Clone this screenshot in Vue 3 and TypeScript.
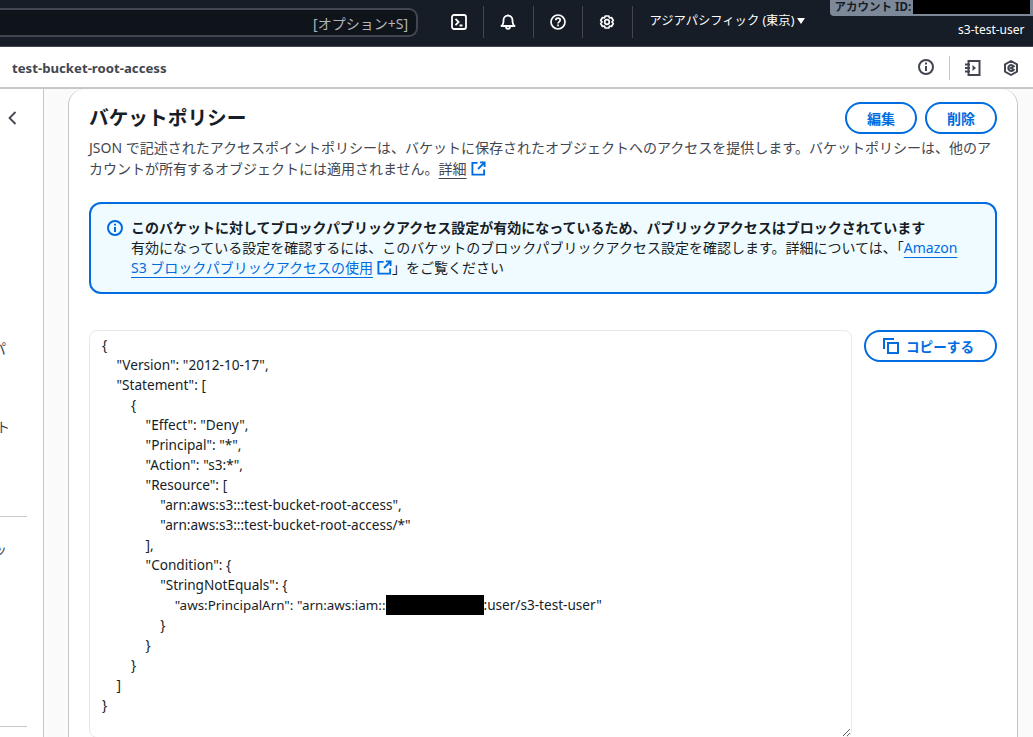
<script setup lang="ts">
const policyBefore = `{
    "Version": "2012-10-17",
    "Statement": [
        {
            "Effect": "Deny",
            "Principal": "*",
            "Action": "s3:*",
            "Resource": [
                "arn:aws:s3:::test-bucket-root-access",
                "arn:aws:s3:::test-bucket-root-access/*"
            ],
            "Condition": {
                "StringNotEquals": {
                    `
const arnLine = `"aws:PrincipalArn": "arn:aws:iam::`
const policyAfter = `:user/s3-test-user"
                }
            }
        }
    ]
}`
</script>

<template>
  <div class="page">
    <header class="topbar">
      <div class="search"><span>[オプション+S]</span></div>
      <div class="tool first">
        <svg width="16" height="16" viewBox="0 0 16 16" fill="none" stroke="#fff" stroke-width="1.8"><rect x="1" y="1" width="14" height="14" rx="2"/><path d="M4.5 4.8 7.6 8l-3.1 3.2M8.5 11.5h3"/></svg>
      </div>
      <div class="tool">
        <svg width="16" height="16" viewBox="0 0 16 16" fill="none" stroke="#fff" stroke-width="1.8" stroke-linejoin="round"><path d="M1.5 12h13c-1.500-1.300-2-2.500-2-4.500V6a4.500 4.500 0 0 0-9 0v1.500c0 2-.5 3.200-2 4.500zM6 12.500c0 1.500.8 2.300 2 2.300s2-.8 2-2.300M8 1.500V.5"/></svg>
      </div>
      <div class="tool">
        <svg width="16" height="16" viewBox="0 0 16 16" fill="none" stroke="#fff" stroke-width="1.7"><circle cx="8" cy="8" r="7"/><path d="M5.800 6.200C5.800 5 6.800 4.200 8 4.200s2.200.8 2.200 1.900c0 1.700-2.200 1.700-2.200 3.500M8 10.600v1.600"/></svg>
      </div>
      <div class="tool">
        <svg width="16" height="16" viewBox="0 0 16 16" fill="none" stroke="#fff" stroke-width="1.7" stroke-linejoin="round"><path d="M6.200 1h3.600l.7 2 2-.5 1.800 3-1.400 1.500 1.400 1.500-1.800 3-2-.5-.7 2H6.200l-.7-2-2 .5-1.800-3L3.100 7 1.700 5.500l1.800-3 2 .5z" transform="translate(0 1)"/><circle cx="8" cy="8" r="2.300"/></svg>
      </div>
      <div class="region">アジアパシフィック (東京)<i class="caret"></i></div>
      <div class="account">
        <div class="badge">アカウント ID:<span class="mask"></span></div>
        <div class="user">s3-test-user</div>
      </div>
    </header>

    <div class="subbar">
      <div class="crumb">test-bucket-root-access</div>
      <div class="subicons">
        <svg width="16" height="16" viewBox="0 0 16 16" fill="none" stroke="#424650" stroke-width="2"><circle cx="8" cy="8" r="7"/><path d="M8 7v5M8 3.600v2"/></svg>
        <span class="subsep"></span>
        <svg width="16" height="16" viewBox="0 0 16 16" fill="none" stroke="#424650" stroke-width="2"><path d="M3.500 1h11v14h-11zM0 4.500h5M0 8h5M0 11.500h5"/><path d="M7.500 5 11 8l-3.500 3z" fill="#424650" stroke="none"/></svg>
        <svg class="ic3" width="16" height="16" viewBox="0 0 16 16" fill="none" stroke="#424650" stroke-width="2"><path d="M8 1l6 3.400v7.200L8 15l-6-3.400V4.400z" stroke-linejoin="round"/><path d="M10.800 6.400A3 3 0 1 0 10.800 9.800L8 8z" fill="none"/></svg>
      </div>
    </div>

    <div class="body">
      <aside class="side">
        <svg class="chev" width="16" height="16" viewBox="0 0 16 16" fill="none" stroke="#424650" stroke-width="1.800"><path d="M10.500 2 4.500 8l6 6"/></svg>
        <span class="frag f1">パ</span>
        <span class="frag f2">ト</span>
        <hr class="rule r1" />
        <span class="frag f3">ッ</span>
        <hr class="rule r2" />
      </aside>

      <main class="gutter">
        <section class="card">
          <div class="headrow">
            <h2>バケットポリシー</h2>
            <div class="btns">
              <button>編集</button>
              <button>削除</button>
            </div>
          </div>
          <p class="desc">JSON で記述されたアクセスポイントポリシーは、バケットに保存されたオブジェクトへのアクセスを提供します。バケットポリシーは、他のアカウントが所有するオブジェクトには適用されません。<a>詳細</a><svg class="ext" width="15" height="15" viewBox="0 0 16 16" fill="none" stroke="#006ce0" stroke-width="2"><path d="M7 2H1.500v12.500H14V9M9.500 1.500H14.500V6.500M14 2 7.500 8.500"/></svg></p>

          <div class="alert">
            <svg class="alert-ic" width="16" height="16" viewBox="0 0 16 16" fill="none" stroke="#006ce0" stroke-width="2"><circle cx="8" cy="8" r="7"/><path d="M8 7v5M8 3.800v1.800"/></svg>
            <div class="alert-text">
              <strong>このバケットに対してブロックパブリックアクセス設定が有効になっているため、パブリックアクセスはブロックされています</strong>
              <div>有効になっている設定を確認するには、このバケットのブロックパブリックアクセス設定を確認します。詳細については、「<a>Amazon S3 ブロックパブリックアクセスの使用</a><svg class="ext" width="15" height="15" viewBox="0 0 16 16" fill="none" stroke="#006ce0" stroke-width="2"><path d="M7 2H1.500v12.500H14V9M9.500 1.500H14.500V6.500M14 2 7.500 8.500"/></svg>」をご覧ください</div>
            </div>
          </div>

          <div class="policy-row">
            <div class="policy"><pre>{{ policyBefore }}<span class="arn">{{ arnLine }}</span><span class="redact"></span>{{ policyAfter }}</pre></div>
            <button class="copy">
              <svg width="16" height="16" viewBox="0 0 16 16" fill="none" stroke="#006ce0" stroke-width="2"><path d="M1 11V1h10"/><rect x="5" y="5" width="10" height="10"/></svg>
              コピーする
            </button>
          </div>
        </section>
      </main>
    </div>
  </div>
</template>

<style>
html, body { margin: 0; padding: 0; overflow: hidden; background: #fff; }
</style>

<style scoped>
.page {
  width: 1033px; height: 737px; overflow: hidden; display: flex; flex-direction: column;
  font-family: "Noto Sans", "Noto Sans CJK JP", sans-serif; font-size: 14px; color: #424650;
}
.topbar {
  flex: 0 0 47px; box-sizing: border-box; height: 47px; background: #161d26; border-bottom: 1px solid #414750;
  display: flex; align-items: flex-start; color: #fff;
}
.search {
  box-sizing: border-box; width: 418px; height: 29px; margin-top: 8px;
  border: 2px solid #424650; border-left: 0; border-radius: 0 9px 9px 0; background: #0f141a;
  display: flex; align-items: center; justify-content: flex-end; padding-right: 8px;
  font-size: 14px; color: #b4b4bb; flex-shrink: 0;
}
.tool {
  box-sizing: border-box; width: 49.500px; height: 32px; margin-top: 6px; display: flex; align-items: center; justify-content: center;
  border-right: 1px solid #424650; flex-shrink: 0;
}
.tool.first { width: 66px; padding-left: 17px; }
.region {
  width: 197px; box-sizing: border-box; padding-left: 17px; margin-top: 12px; font-size: 12.300px; line-height: 18px; white-space: nowrap; flex-shrink: 0;
}
.caret {
  display: inline-block; margin-left: 3px; vertical-align: 1px; width: 0; height: 0;
  border-left: 4px solid transparent; border-right: 4px solid transparent; border-top: 6px solid #fff;
}
.account { width: 203px; flex-shrink: 0; display: flex; flex-direction: column; align-items: flex-end; }
.badge {
  box-sizing: border-box; width: 203px; height: 16px; background: #7d8998; color: #161d26; border-radius: 0 0 0 4px;
  font-size: 11.500px; font-weight: 700; line-height: 14px; padding-left: 5px; white-space: nowrap; position: relative; overflow: hidden;
}
.mask { position: absolute; left: 83px; top: 0; width: 117px; height: 14px; background: #000; }
.user { margin-top: 6px; margin-right: 8px; font-size: 12px; line-height: 16px; }

.subbar {
  flex: 0 0 42px; box-sizing: border-box; height: 42px; background: #fff; border-bottom: 2px solid #c6c6cd;
  display: flex; align-items: center; justify-content: space-between; padding: 1px 14px 0 12px;
}
.crumb { font-size: 13.200px; font-weight: 700; color: #424650; }
.subicons { display: flex; align-items: center; }
.subicons svg:first-child { margin-top: -2px; }
.subsep { width: 1px; height: 24px; background: #c6c6cd; margin: 0 15px 0 15px; }
.ic3 { margin-left: 22px; }

.body { flex: 1; display: flex; min-height: 0; background: #fafafa; }
.side {
  flex: 0 0 44px; box-sizing: border-box; width: 44px; background: #fff; border-right: 1px solid #c6c6cd;
  display: flex; flex-direction: column; overflow: hidden;
}
.chev { margin: 21px 0 0 5px; flex-shrink: 0; }
.frag { display: block; line-height: 20px; font-size: 14px; color: #424650; }
.f1 { margin: 213px 0 0 -8px; }
.f2 { margin: 58px 0 0 -4px; }
.rule { border: 0; height: 1px; background: #c6c6cd; width: 27px; margin: 0; flex-shrink: 0; }
.r1 { margin-top: 79px; }
.f3 { margin: 23px 0 0 -7px; }
.r2 { margin-top: 166px; }

.gutter { flex: 1; min-width: 0; padding: 0 15px 0 24px; }
.card {
  box-sizing: border-box; height: 660px; background: #fff; border: 1px solid #c6c6cd; border-top: 0;
  border-radius: 16px 16px 0 0; padding: 13px 20px 0; overflow: hidden;
}
.headrow { display: flex; justify-content: space-between; align-items: flex-start; }
h2 { margin: 3px 0 0; font-size: 19.700px; font-weight: 700; line-height: 26px; color: #161d26; }
.btns { display: flex; gap: 8px; }
button {
  box-sizing: border-box; height: 32px; width: 72px; border: 2px solid #006ce0; border-radius: 16px; background: #fff;
  color: #006ce0; font-family: inherit; font-size: 14px; font-weight: 700; padding: 0;
}
.desc { margin: 3px 0 0; font-size: 14px; line-height: 21px; }
a { color: #006ce0; text-decoration: underline; text-underline-offset: 4px; }
.desc a { color: #424650; }
.ext { margin-left: 4px; vertical-align: -2px; }
.alert {
  box-sizing: border-box; margin-top: 23px; height: 92px; border: 2px solid #006ce0; border-radius: 12px; background: #f0fbff;
  display: flex; padding: 14px 16px; color: #161d26;
}
.alert-ic { flex-shrink: 0; margin: 2px 8px 0 0; }
.alert-text { line-height: 20px; font-size: 14px; width: 830px; flex-shrink: 0; }
.alert-text strong { display: block; font-weight: 700; white-space: nowrap; }
.policy-row { display: flex; gap: 12px; align-items: flex-start; margin-top: 36px; }
.policy {
  flex: 0 0 763px; box-sizing: border-box; height: 408px; border: 1px solid #e8e8ec; border-radius: 8px;
  padding: 4px 12px; overflow: hidden; resize: vertical; color: #161d26;
}
pre { margin: 0; font-family: inherit; font-size: 13.600px; word-spacing: 0.1px; line-height: 20px; white-space: pre; }
.arn { font-size: 13.400px; }
.redact { display: inline-block; width: 98px; height: 20px; background: #000; vertical-align: top; }
.copy {
  width: 133px; height: 32px; display: flex; align-items: center; justify-content: center; gap: 7px; flex-shrink: 0; font-size: 13.600px; padding-right: 4px;
}
</style>
